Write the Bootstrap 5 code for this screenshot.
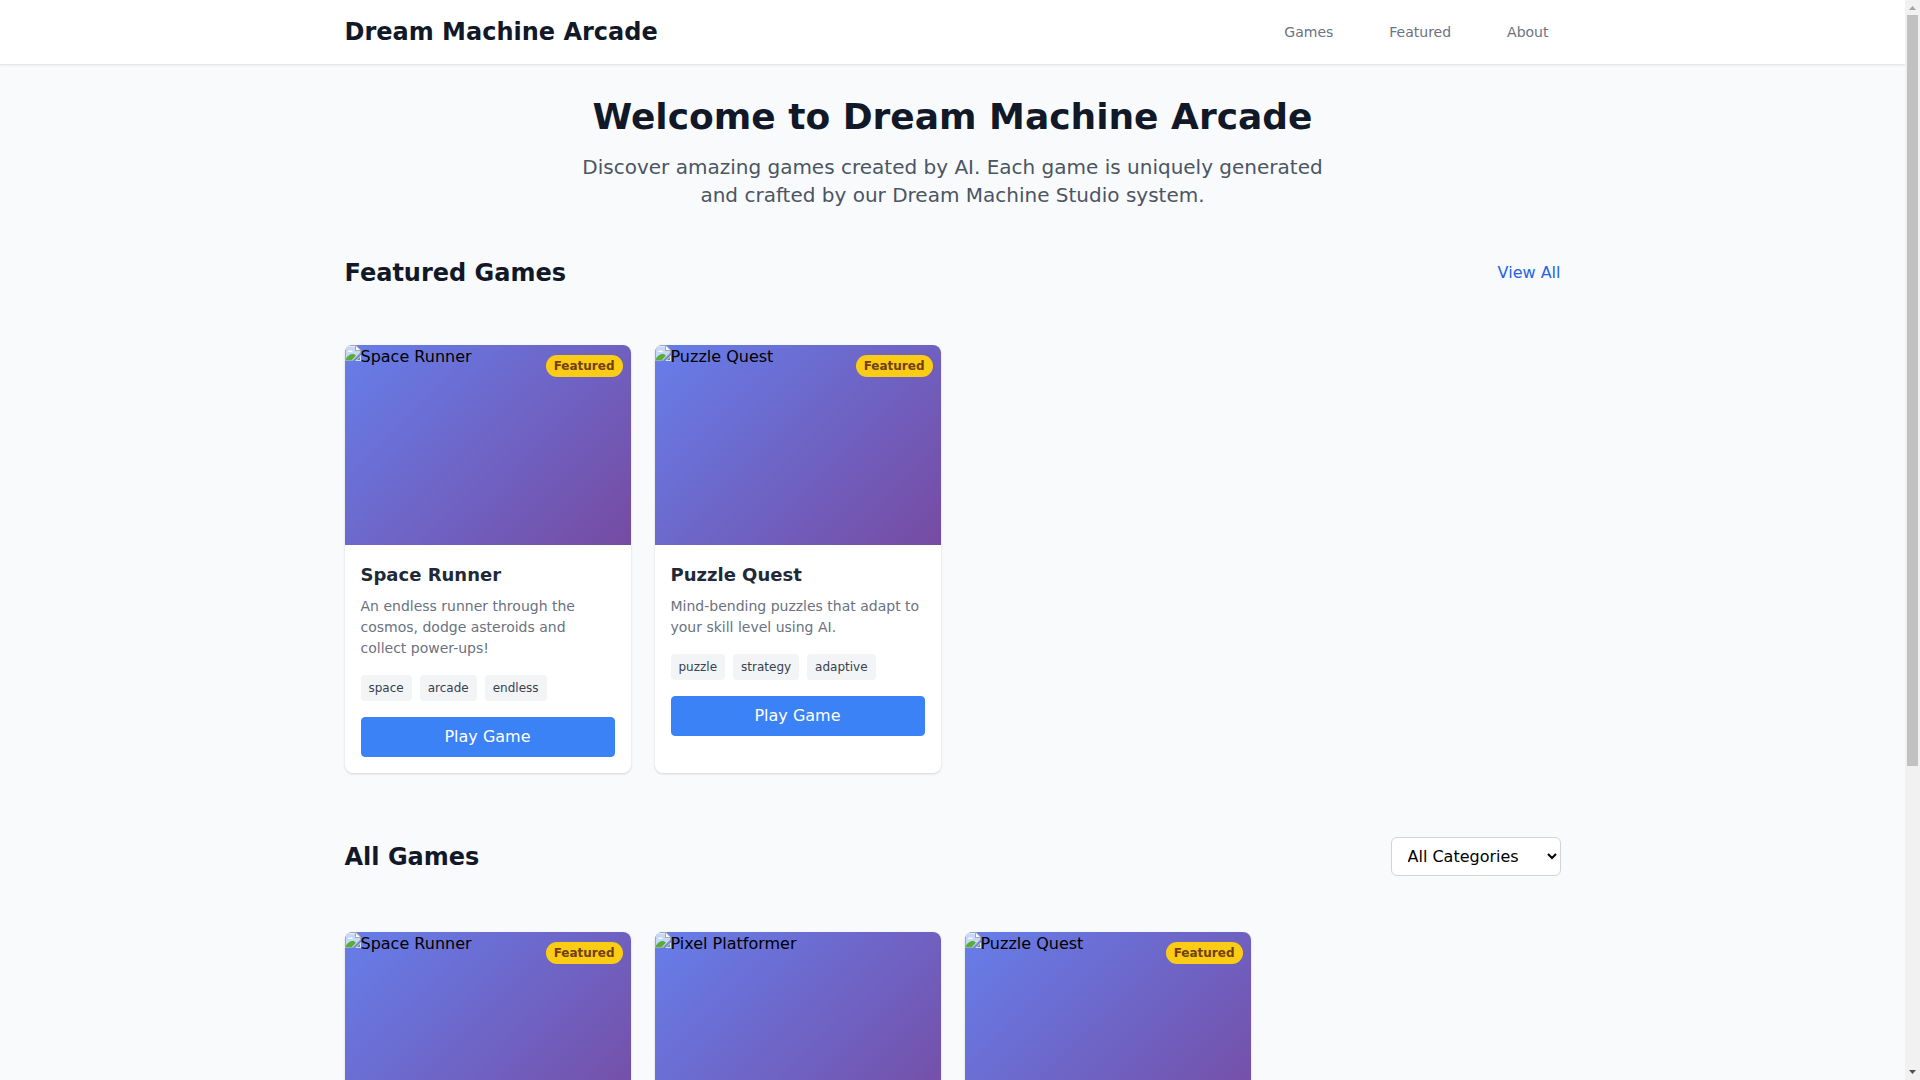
<!DOCTYPE html>
<html lang="en">
<head>
<meta charset="utf-8">
<meta name="viewport" content="width=device-width, initial-scale=1">
<title>Dream Machine Arcade</title>
<link href="https://cdn.jsdelivr.net/npm/bootstrap@5.3.0/dist/css/bootstrap.min.css" rel="stylesheet">
<style>
body { padding-right: 15px; background: #f9fafb; color: #000; font-family: "DejaVu Sans", sans-serif; font-size: 16px; line-height: 24px; }
.site-wrap { max-width: 1280px; padding: 0 32px; }
.site-header { background: #fff; border-bottom: 1px solid #e5e7eb; box-shadow: 0 1px 2px rgba(0,0,0,.05); }
.site-bar { min-height: 64px; }
.site-title, .section-title { font-size: 24px; line-height: 32px; font-weight: 700; color: #111827; }
.site-nav { gap: 32px; }
.site-nav .nav-link { padding: 8px 12px; font-size: 14px; line-height: 20px; color: #6b7280; }
.hero-title { font-size: 36px; line-height: 40px; font-weight: 700; color: #111827; }
.hero-text { max-width: 768px; font-size: 20px; line-height: 28px; color: #4b5563; }
.view-all { color: #2563eb; }
.game-grid { padding: 32px 0; }
.game-card { border: 0; border-radius: 8px; overflow: hidden; box-shadow: 0 1px 3px rgba(0,0,0,.1), 0 1px 2px rgba(0,0,0,.06); }
.game-thumb { height: 200px; background: linear-gradient(135deg, #667eea 0%, #764ba2 100%); }
.game-tag-featured { top: 10px; right: 8px; padding: 2px 8px; border-radius: 12px; background: #facc15; color: #713f12; font-size: 12px; line-height: 18px; font-weight: 600; }
.game-name { font-size: 18px; line-height: 27px; font-weight: 600; color: #1f2937; }
.game-desc { font-size: 14px; line-height: 21px; color: #6b7280; }
.game-tag { padding: 4px 8px; border-radius: 4px; background: #f3f4f6; color: #374151; font-size: 12px; line-height: 18px; }
.play-btn { --bs-btn-bg: #3b82f6; --bs-btn-color: #fff; --bs-btn-border-color: #3b82f6; --bs-btn-hover-bg: #2563eb; --bs-btn-hover-color: #fff; --bs-btn-border-radius: 4px; --bs-btn-padding-y: 7px; line-height: 24px; }
.category-select { min-width: 170px; padding: 8px 12px; border: 1px solid #d1d5db; border-radius: 6px; background: #fff; color: #000; line-height: normal; }
.scroll-rail { width: 15px; background: #f1f1f1; }
.scroll-rail svg { flex: none; display: block; }
.scroll-track { padding: 0 2px; }
.scroll-thumb { height: 71.5%; background: #c1c1c1; }
</style>
<script src="https://cdn.jsdelivr.net/npm/bootstrap@5.3.0/dist/js/bootstrap.bundle.min.js"></script>
</head>
<body>
<svg class="d-none" aria-hidden="true">
  <symbol id="thumb-missing" viewBox="0 0 16 16">
    <path d="M0 0h11l5 5v3L8 16H0z" fill="#a9a9a9"/>
    <path d="M1 1h9v5h5v1.500L7.500 15H1z" fill="#e4edfd"/>
    <path d="M1 2h9v4h5v1.500L8 14H1z" fill="#c5d8fa"/>
    <path d="M3 7c0-1.600 1.600-2 2.300-1C6 4.600 8 5.500 7.500 7z" fill="#fff"/>
    <path d="M1 15v-1.500C3 10.500 5 9 7.500 9c1.500 0 2.500.7 3.500 1.500L7 15z" fill="#56ad38"/>
    <path d="M11 1v4h4z" fill="#fff"/>
    <path d="M16 10v6h-6z" fill="#d5dcf5"/>
    <path d="M15 12v3h-3z" fill="#56ad38"/>
  </symbol>
</svg>

<header class="site-header">
  <div class="container-fluid site-wrap site-bar d-flex align-items-center justify-content-between">
    <div class="site-title">Dream Machine Arcade</div>
    <nav class="nav site-nav" aria-label="Main">
      <a class="nav-link" href="#all">Games</a>
      <a class="nav-link" href="#featured">Featured</a>
      <a class="nav-link" href="#about">About</a>
    </nav>
  </div>
</header>

<main class="container-fluid site-wrap">
  <section class="text-center pt-4 mt-2 mb-5">
    <h1 class="hero-title mb-3">Welcome to Dream Machine Arcade</h1>
    <p class="hero-text mx-auto mb-0">Discover amazing games created by AI. Each game is uniquely generated and crafted by our Dream Machine Studio system.</p>
  </section>

  <section id="featured">
    <div class="d-flex align-items-center justify-content-between mb-4">
      <h2 class="section-title mb-0">Featured Games</h2>
      <a class="view-all text-decoration-none" href="#all">View All</a>
    </div>
    <div class="game-grid">
      <div class="row row-cols-1 row-cols-md-2 row-cols-lg-4 gx-4">
        <div class="col">
          <article class="card game-card h-100">
            <div class="game-thumb d-flex align-items-start"><svg width="16" height="16" aria-hidden="true"><use href="#thumb-missing"/></svg><span>Space Runner</span></div>
            <span class="game-tag-featured position-absolute">Featured</span>
            <div class="p-3">
              <h3 class="game-name mb-2">Space Runner</h3>
              <p class="game-desc mb-3">An endless runner through the cosmos, dodge asteroids and collect power-ups!</p>
              <div class="d-flex flex-wrap gap-2 mb-3"><span class="game-tag">space</span><span class="game-tag">arcade</span><span class="game-tag">endless</span></div>
              <button type="button" class="btn play-btn w-100">Play Game</button>
            </div>
          </article>
        </div>
        <div class="col">
          <article class="card game-card h-100">
            <div class="game-thumb d-flex align-items-start"><svg width="16" height="16" aria-hidden="true"><use href="#thumb-missing"/></svg><span>Puzzle Quest</span></div>
            <span class="game-tag-featured position-absolute">Featured</span>
            <div class="p-3">
              <h3 class="game-name mb-2">Puzzle Quest</h3>
              <p class="game-desc mb-3">Mind-bending puzzles that adapt to your skill level using AI.</p>
              <div class="d-flex flex-wrap gap-2 mb-3"><span class="game-tag">puzzle</span><span class="game-tag">strategy</span><span class="game-tag">adaptive</span></div>
              <button type="button" class="btn play-btn w-100">Play Game</button>
            </div>
          </article>
        </div>
      </div>
    </div>
  </section>

  <section id="all" class="pt-4 mt-2">
    <div class="d-flex align-items-center justify-content-between mb-4">
      <h2 class="section-title mb-0">All Games</h2>
      <select id="category" class="category-select" aria-label="Category">
        <option>All Categories</option>
        <option>Arcade</option>
        <option>Puzzle</option>
        <option>Platformer</option>
      </select>
    </div>
    <div class="game-grid">
      <div class="row row-cols-1 row-cols-md-2 row-cols-lg-4 gx-4">
        <div class="col">
          <article class="card game-card h-100">
            <div class="game-thumb d-flex align-items-start"><svg width="16" height="16" aria-hidden="true"><use href="#thumb-missing"/></svg><span>Space Runner</span></div>
            <span class="game-tag-featured position-absolute">Featured</span>
          </article>
        </div>
        <div class="col">
          <article class="card game-card h-100">
            <div class="game-thumb d-flex align-items-start"><svg width="16" height="16" aria-hidden="true"><use href="#thumb-missing"/></svg><span>Pixel Platformer</span></div>
          </article>
        </div>
        <div class="col">
          <article class="card game-card h-100">
            <div class="game-thumb d-flex align-items-start"><svg width="16" height="16" aria-hidden="true"><use href="#thumb-missing"/></svg><span>Puzzle Quest</span></div>
            <span class="game-tag-featured position-absolute">Featured</span>
          </article>
        </div>
      </div>
    </div>
  </section>
</main>

<div class="scroll-rail position-fixed top-0 end-0 bottom-0 d-flex flex-column" aria-hidden="true">
  <svg width="15" height="15" viewBox="0 0 15 15"><path d="M4 10 7.500 6 11 10z" fill="#a3a3a3"/></svg>
  <div class="scroll-track flex-grow-1"><div class="scroll-thumb"></div></div>
  <svg width="15" height="15" viewBox="0 0 15 15"><path d="M4 5h7L7.500 9z" fill="#505050"/></svg>
</div>
</body>
</html>
